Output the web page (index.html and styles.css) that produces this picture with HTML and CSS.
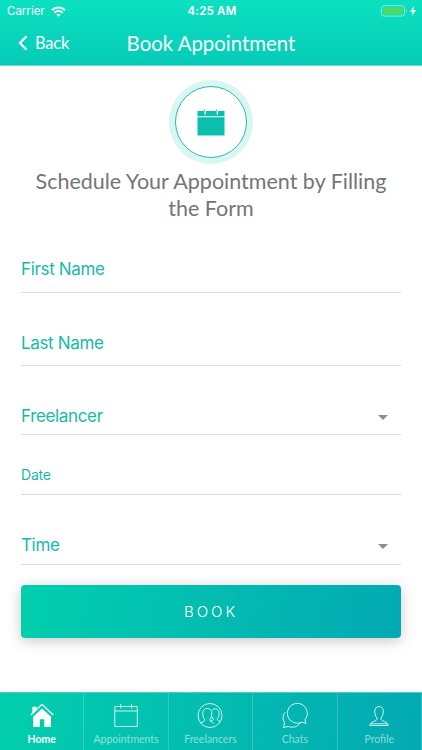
FILE: index.html
```
<!DOCTYPE html>
<html lang="en">
<head>
<meta charset="UTF-8" />
<meta name="viewport" content="width=device-width, initial-scale=1" />
<title>Book Appointment</title>
<link rel="stylesheet" href="styles.css">
</head>
<body>
  <div class="app">
    <header class="header">
      <div class="status">
        <div class="carrier">
          <span>Carrier</span>
          <svg width="15" height="11" viewBox="0 0 15 11" fill="none" stroke="#fff" stroke-width="2">
            <path d="M1 4.2C4.8.6 10.2.6 14 4.2M3.4 6.7c2.4-2.2 5.8-2.2 8.2 0"/>
            <path d="M5.3 8.5c1.3-1.1 3.1-1.1 4.4 0L7.500 10.800z" fill="#fff" stroke="none"/>
          </svg>
        </div>
        <div class="clock">4:25 AM</div>
        <div class="battery">
          <svg width="36" height="12" viewBox="0 0 36 12">
            <rect x=".5" y=".7" width="23" height="10.400" rx="2.500" fill="none" stroke="#7eeedb"/>
            <rect x="2" y="2.200" width="20" height="7.400" rx="1.300" fill="#4cd964"/>
            <path d="M25 4.200c1.300.5 1.300 2.900 0 3.400z" fill="#7eeedb"/>
            <path d="M33.300.8l-4.300 6h2.600l-.8 4.300 4.300-6h-2.700z" fill="#fff"/>
          </svg>
        </div>
      </div>
      <div class="navbar">
        <a class="back" href="#">
          <svg width="10" height="16" viewBox="0 0 10 16" fill="none" stroke="#fff" stroke-width="2.200">
            <path d="M8.500 1.200L2 8l6.500 6.800"/>
          </svg>
          <span>Back</span>
        </a>
        <h1 class="title">Book Appointment</h1>
      </div>
    </header>

    <main class="content">
      <div class="badge">
        <svg width="28" height="27" viewBox="0 0 28 27" fill="#0abfac">
          <path d="M.5 2h27v5.200H.5zM.5 8.300h27V26.500H.5z"/>
          <path d="M8.200 1v4.500M20.300 1v4.500" stroke="#fff" stroke-width="1.400"/>
          <path d="M7.300 0v2.200M19.400 0v2.200" stroke="#0abfac" stroke-width=".7"/>
        </svg>
      </div>
      <h2 class="heading">Schedule Your Appointment by Filling the Form</h2>

      <form class="form">
        <div class="field first"><label>First Name</label></div>
        <div class="field last"><label>Last Name</label></div>
        <div class="field select"><label>Freelancer</label><span class="caret"></span></div>
        <div class="field date"><label>Date</label></div>
        <div class="field time"><label>Time</label><span class="caret"></span></div>
        <button class="book" type="button">BOOK</button>
      </form>
    </main>

    <nav class="tabs">
      <a class="tab active" href="#">
        <svg width="26" height="28" viewBox="0 0 26 28">
          <path d="M4.200 15.700v10.400h6.700v-7.800h4.400v7.800H22V15.700L13 7.500z" fill="#fff"/>
          <path d="M3.400 5.800h4.200v3.400l-4.200 4z" fill="#fff"/>
          <path d="M1.800 14L13 3.400 24.200 14" fill="none" stroke="#fff" stroke-width="1.300"/>
        </svg>
        <span>Home</span>
      </a>
      <a class="tab" href="#">
        <svg width="26" height="28" viewBox="0 0 26 28">
          <path d="M1.800 5.500h22.500v20H1.800zM1.800 10h22.500M7.700 3v4.500M18.500 3v4.500"/>
        </svg>
        <span>Appointments</span>
      </a>
      <a class="tab" href="#">
        <svg width="26" height="28" viewBox="0 0 26 28">
          <circle cx="13" cy="14.500" r="12"/>
          <path d="M3.600 22c2-1.600 4.500-1.300 4.300-3.200C6.200 17 5.700 15.200 5.800 12c0-6 8.800-6 8.900-.2 0 3.200-.4 5-2 7-.2 2 2.600 1.500 4.400 4M14.800 9.500c2.200-3.200 7.400-1.600 7.300 2.800 0 2.500-.6 4.200-1.900 5.800 0 1.400 1.800 1.300 2.900 2.600M14.800 15.300c.4 1.300 1 2.100 1.600 2.800-.1 1-1 1.300-2.300 1.600"/>
        </svg>
        <span>Freelancers</span>
      </a>
      <a class="tab" href="#">
        <svg width="26" height="28" viewBox="0 0 26 28">
          <path d="M25.300 12.200c0 2.600-.9 4.900-2.400 6.500l1.100 3.800-4.200-1.300A10 10 0 1 1 25.300 12.200z"/>
          <path d="M3.100 11.300A9.200 9.200 0 0 0 2.700 22L1.400 26.500l4.800-1c4.400 1.500 9.500.6 12-3.500"/>
        </svg>
        <span>Chats</span>
      </a>
      <a class="tab" href="#">
        <svg width="26" height="28" viewBox="0 0 26 28">
          <path d="M11.100 17.200C9.300 14.800 8.700 13 8.700 10c0-5.900 8.600-5.900 8.600 0 0 3-.6 4.800-2.400 7.200 0 4.300 6.900 2.400 7.300 7.300H3.800c.4-4.900 7.300-3 7.300-7.300z"/>
          <path d="M5 22.800h16"/>
        </svg>
        <span>Profile</span>
      </a>
    </nav>
  </div>
</body>
</html>
```
FILE: styles.css
```
* {
  box-sizing: border-box;
}
html, body {
  margin: 0;
  padding: 0;
  height: 100%;
  background: #fff;
  font-family: Lato, 'Noto Sans', sans-serif;
  overflow: hidden;
}
svg {
  display: block;
}
a {
  color: inherit;
  text-decoration: none;
}
.app {
  display: flex;
  flex-direction: column;
  height: 100vh;
}

/* header */
.header {
  height: 66px;
  color: #fff;
  background: linear-gradient(#0be1c1, #06cbb7);
  border-bottom: 1px solid #62ded0;
}
.status {
  display: grid;
  grid-template-columns: 1fr auto 1fr;
  align-items: center;
  height: 22px;
  padding: 0 5px 0 7px;
  font-family: Inter, sans-serif;
  font-size: 11.5px;
}
.carrier {
  display: flex;
  align-items: center;
  gap: 6px;
}
.clock {
  font-weight: 600;
  letter-spacing: 0.2px;
}
.battery {
  justify-self: end;
}
.navbar {
  display: grid;
  grid-template-columns: 1fr auto 1fr;
  align-items: center;
  height: 42px;
  padding: 0 18px;
}
.back {
  display: flex;
  align-items: center;
  gap: 7px;
  font-size: 16.5px;
  letter-spacing: -0.2px;
}
.title {
  margin: 0;
  font-size: 20.4px;
  font-weight: 400;
}

/* form */
.content {
  flex: 1;
  padding: 14px 21px 0;
}
.badge {
  display: flex;
  align-items: center;
  justify-content: center;
  width: 72px;
  height: 72px;
  margin: 6px auto 10px;
  border: 1px solid #22b9a9;
  border-radius: 50%;
  box-shadow: 0 0 0 6px #d8f6f2;
}
.heading {
  margin: 0;
  font-size: 21.5px;
  font-weight: 400;
  line-height: 27px;
  text-align: center;
  color: #757575;
}
.form {
  display: flex;
  flex-direction: column;
  font-family: Inter, sans-serif;
}
.field {
  display: flex;
  justify-content: space-between;
  height: 70px;
  padding-top: 39px;
  border-bottom: 1px solid #dedede;
  color: #16bba8;
  font-size: 17px;
  letter-spacing: -0.35px;
  line-height: 22px;
}
.first {
  height: 71px;
  padding-top: 36px;
}
.last {
  height: 73px;
}
.select {
  height: 69px;
}
.date {
  height: 60px;
  padding-top: 29px;
  font-size: 14px;
  letter-spacing: -0.2px;
}
.caret {
  width: 0;
  height: 0;
  margin: 10px 13px 0 0;
  border: 5px solid transparent;
  border-top-color: #8e8e8e;
  border-bottom: 0;
}
.book {
  height: 53px;
  margin-top: 20px;
  padding: 0;
  border: 0;
  border-radius: 4px;
  color: #fff;
  background: linear-gradient(100deg, #02cfae, #03a9b3);
  box-shadow: 0 3px 14px rgba(0, 0, 0, 0.22);
  font-family: Inter, sans-serif;
  font-size: 15px;
  font-weight: 300;
  letter-spacing: 3px;
}

/* bottom tabs */
.tabs {
  display: grid;
  grid-template-columns: repeat(5, 1fr);
  height: 58px;
  background: linear-gradient(100deg, #02cfae, #03a9b3);
  border-top: 1px solid #47cfc1;
}
.tab {
  display: flex;
  flex-direction: column;
  align-items: center;
  padding-top: 8px;
  border-right: 1px solid rgba(255, 255, 255, 0.2);
  color: rgba(255, 255, 255, 0.55);
  font-size: 10.5px;
  line-height: 13px;
}
.tab span {
  margin-top: 4px;
}
.tab svg {
  fill: none;
  stroke: rgba(255, 255, 255, 0.8);
  stroke-width: 1;
}
.tab.active {
  color: #fff;
  font-weight: 700;
}
.tab.active svg {
  stroke: none;
}
```
